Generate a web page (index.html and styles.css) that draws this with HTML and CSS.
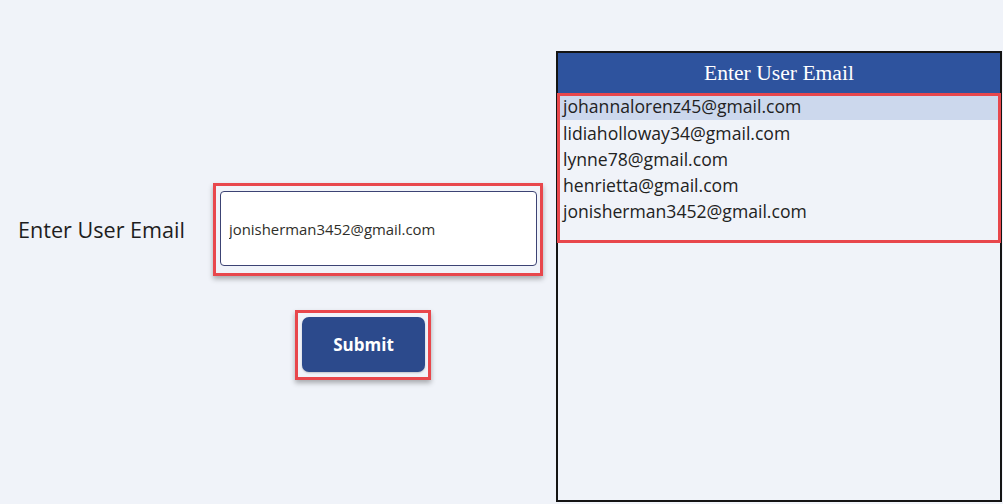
FILE: index.html
```html
<!DOCTYPE html>
<html lang="en">
<head>
  <meta charset="UTF-8" />
  <title>Enter User Email</title>
  <link rel="stylesheet" href="styles.css">
</head>
<body>
  <div class="page">
    <div class="form">
      <div class="email-row">
        <label class="label" for="email">Enter User Email</label>
        <div class="highlight input-highlight">
          <input class="email-input" id="email" type="text" value="jonisherman3452@gmail.com" />
        </div>
      </div>

      <div class="actions">
        <div class="highlight button-highlight">
          <button class="submit-button">Submit</button>
        </div>
      </div>
    </div>

    <div class="panel">
      <div class="panel-header">Enter User Email</div>
      <ul class="email-list">
        <li class="selected">johannalorenz45@gmail.com</li>
        <li>lidiaholloway34@gmail.com</li>
        <li>lynne78@gmail.com</li>
        <li>henrietta@gmail.com</li>
        <li>jonisherman3452@gmail.com</li>
      </ul>
    </div>
  </div>
</body>
</html>
```

FILE: styles.css
```css
* {
  margin: 0;
  padding: 0;
  box-sizing: border-box;
}

body {
  font-family: 'Open Sans', 'Noto Sans', sans-serif;
  background: #f0f3f9;
  color: #222;
  height: 504px;
  overflow: hidden;
}

.page {
  display: flex;
  padding-top: 51px;
}

.form {
  width: 556px;
  padding-top: 132px;
}

.email-row {
  display: flex;
  align-items: center;
}

.label {
  width: 213px;
  padding-left: 18px;
  font-size: 21.6px;
  color: #1e1e1e;
}

.highlight {
  border: 3px solid #e8474c;
  box-shadow: 0 3px 5px rgba(0, 0, 0, 0.3);
}

.input-highlight {
  width: 330px;
  height: 93px;
  padding: 5px 3px 7px 4px;
}

.email-input {
  width: 100%;
  height: 100%;
  border: 1px solid #3c4374;
  border-radius: 4px;
  background: #fff;
  padding-left: 8px;
  font-family: 'Open Sans', sans-serif;
  font-size: 14.9px;
  color: #2f2f2a;
  outline: none;
}

.actions {
  padding-left: 295px;
  margin-top: 34px;
}

.button-highlight {
  width: 136px;
  height: 70px;
  padding: 4px 3px 5px 4px;
}

.submit-button {
  width: 100%;
  height: 100%;
  background: #2c4a8c;
  color: #fff;
  border: none;
  border-radius: 7px;
  font-family: 'Open Sans', sans-serif;
  font-size: 17px;
  font-weight: 700;
  box-shadow: 0 1px 2px rgba(0, 0, 0, 0.2);
}

.panel {
  width: 446px;
  height: 451px;
  border: 2px solid #141414;
  background: #f0f3f9;
}

.panel-header {
  height: 40px;
  background: #2e539e;
  color: #fff;
  font-family: 'Liberation Serif', 'DejaVu Serif', serif;
  font-size: 21.6px;
  display: flex;
  align-items: center;
  justify-content: center;
}

.email-list {
  list-style: none;
  height: 150px;
  margin: 0 -1px;
  border: 3px solid #e8474c;
  font-size: 17.6px;
  color: #222;
}

.email-list li {
  height: 26px;
  line-height: 26px;
  padding-left: 3px;
}

.email-list li.selected {
  background: #ccd8ed;
  height: 24px;
  line-height: 20px;
}
```
